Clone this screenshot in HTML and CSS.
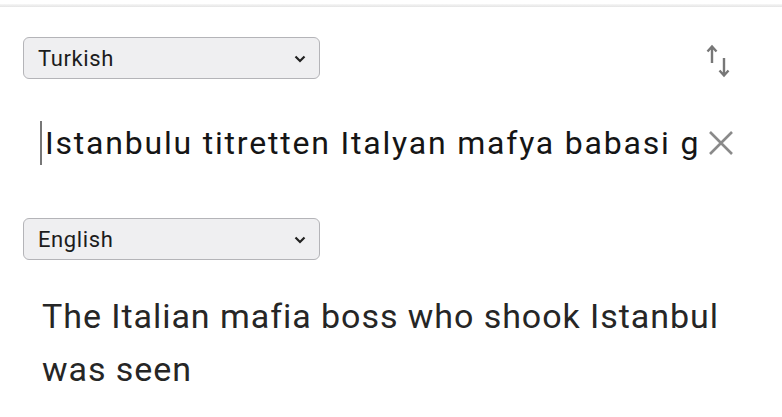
FILE: index.html
```html
<!DOCTYPE html>
<html>
<head>
<meta charset="utf-8">
<link rel="stylesheet" href="styles.css">
</head>
<body>
<div class="topbar"></div>
<main class="panel">
  <div class="row">
    <div class="select">
      <span class="select-label">Turkish</span>
      <svg class="chev" width="12" height="8" viewBox="0 0 12 8"><path d="M1.5 1.5 L6 6 L10.5 1.5" fill="none" stroke="#222" stroke-width="2.2"/></svg>
    </div>
    <svg class="swap" width="28" height="36" viewBox="0 0 28 36"><path d="M6 20 V4 M1.5 8.5 L6 3.5 L10.5 8.5" fill="none" stroke="#777" stroke-width="2.4"/><path d="M18 15 V32 M13.5 27.5 L18 32.5 L22.5 27.5" fill="none" stroke="#777" stroke-width="2.4"/></svg>
  </div>
  <div class="input">
    <span class="caret"></span>
    <span class="input-text">Istanbulu titretten Italyan mafya babasi gorüntülendi</span>
    <svg class="clear" width="28" height="28" viewBox="0 0 28 28"><path d="M3 3 L25 25 M25 3 L3 25" stroke="#8a8a8a" stroke-width="2.6" fill="none"/></svg>
  </div>
  <div class="row row2">
    <div class="select">
      <span class="select-label">English</span>
      <svg class="chev" width="12" height="8" viewBox="0 0 12 8"><path d="M1.5 1.5 L6 6 L10.5 1.5" fill="none" stroke="#222" stroke-width="2.2"/></svg>
    </div>
  </div>
  <p class="output">The Italian mafia boss who shook Istanbul was seen</p>
</main>
</body>
</html>
```
FILE: styles.css
```css
html, body {
  margin: 0;
  padding: 0;
  background: #ffffff;
}
body {
  font-family: Roboto, "Noto Sans", sans-serif;
  color: #1a1a1a;
  width: 782px;
  height: 417px;
  overflow: hidden;
}
.topbar {
  margin-top: 4px;
  height: 3px;
  background: linear-gradient(#f7f7f7, #e4e4e4);
}
.panel {
  padding: 30px 40px 0 23px;
}
.row {
  display: flex;
  align-items: flex-start;
  justify-content: space-between;
  margin-right: 8px;
}
.select {
  box-sizing: border-box;
  width: 297px;
  height: 42px;
  background: #efeff1;
  border: 1px solid #b4b4b8;
  border-radius: 6px;
  display: flex;
  align-items: center;
  justify-content: space-between;
  padding: 0 13px 0 14px;
}
.select-label {
  font-size: 22px;
  letter-spacing: 0.6px;
  color: #1c1c1c;
}
.chev {
  display: block;
  margin-top: 2px;
}
.swap {
  display: block;
  margin-top: 6px;
}
.input {
  display: flex;
  align-items: center;
  margin-top: 41px;
  height: 46px;
}
.caret {
  width: 2px;
  height: 44px;
  background: #777;
  margin-left: 17px;
  margin-right: 3px;
  flex: none;
}
.input-text {
  font-size: 32px;
  letter-spacing: 1.8px;
  color: #151515;
  white-space: nowrap;
  overflow: hidden;
  width: 652px;
  flex: none;
  margin-right: 10px;
}
.clear {
  display: block;
  flex: none;
}
.row2 {
  margin-top: 52px;
}
.output {
  margin: 30px 0 0 19px;
  font-size: 34px;
  letter-spacing: 0.95px;
  line-height: 53px;
  color: #262626;
  width: 700px;
}
```
